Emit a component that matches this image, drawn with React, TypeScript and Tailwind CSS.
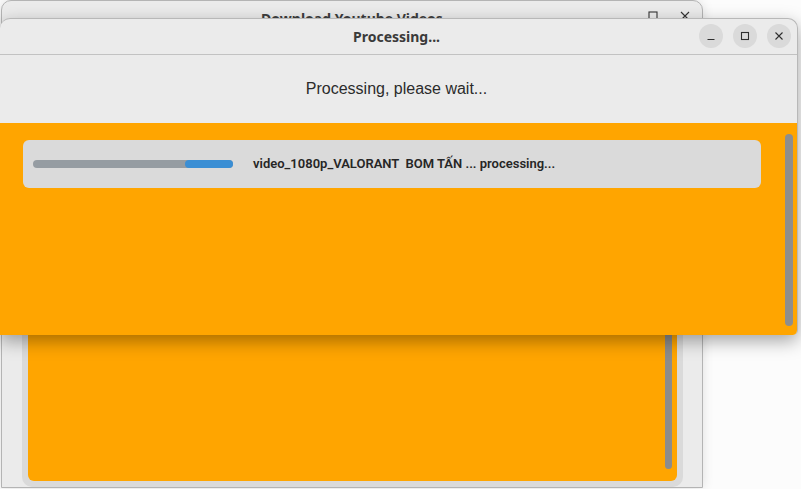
import React from 'react'

function WinButton({ kind }: { kind: 'min' | 'max' | 'close' }) {
  return (
    <div className="w-[24px] h-[24px] rounded-full bg-[#dadada] flex items-center justify-center">
      <svg width="12" height="12" viewBox="0 0 12 12" fill="none" stroke="#2e2e2e" strokeWidth="1.1">
        {kind === 'min' && <path d="M2.5 9.5h7" />}
        {kind === 'max' && <rect x="2.5" y="2.5" width="7" height="7" />}
        {kind === 'close' && <path d="M2.5 2.5l7 7M9.5 2.5l-7 7" />}
      </svg>
    </div>
  )
}

export default function App() {
  return (
    <div className="relative w-[801px] h-[489px] overflow-hidden bg-[#fcfcfc]" style={{ fontFamily: '"Liberation Sans", Arial, sans-serif' }}>
      {/* Background window */}
      <div className="absolute left-[1px] top-0 w-[702px] h-[488px] flex flex-col rounded-t-[10px] border border-[#b4b4b4] bg-[#ebebeb] shadow-[0_0_12px_rgba(0,0,0,0.12)]">
        <div className="relative h-[37px] flex items-center justify-center">
          <span className="text-[14px] font-bold text-[#3d3d3d] mt-[-2px]" style={{ fontFamily: '"Noto Sans", sans-serif' }}>Download Youtube Videos</span>
          <div className="absolute right-[10px] top-[8px] flex gap-[18px] text-[#333]">
            <svg width="14" height="14" viewBox="0 0 14 14" fill="none" stroke="#333" strokeWidth="1.1"><rect x="3" y="3" width="8" height="8" /></svg>
            <svg width="14" height="14" viewBox="0 0 14 14" fill="none" stroke="#333" strokeWidth="1.1"><path d="M3 3l8 8M11 3l-8 8" /></svg>
          </div>
        </div>
        <div className="flex-1 flex flex-col pl-[20px] pr-[19px] pt-[24px]">
          <div className="flex-1 rounded-b-[10px] bg-[#dadada] px-[6px] pb-[6px] pt-[6px]">
            <div className="h-full rounded-[6px] bg-[#ffa500] flex justify-end pr-[5px] pt-[20px] pb-[12px]">
              <div className="w-[7px] rounded-full bg-[#8c8c8c]" />
            </div>
          </div>
        </div>
      </div>

      {/* Processing dialog */}
      <div className="absolute left-0 top-[18px] w-[798px] h-[317px] flex flex-col rounded-t-[10px] rounded-br-[5px] border-r border-t border-[#b8b8b8] bg-[#ebebeb] shadow-[0_6px_18px_rgba(0,0,0,0.35)] overflow-hidden">
        <div className="relative h-[36px] flex items-center justify-center border-b border-[#c2c2c2] shrink-0">
          <span className="text-[14px] font-bold text-[#3a3a3a] ml-[-4px]" style={{ fontFamily: '"Noto Sans", sans-serif' }}>Processing...</span>
          <div className="absolute right-[6px] top-[5px] flex gap-[10px]">
            <WinButton kind="min" />
            <WinButton kind="max" />
            <WinButton kind="close" />
          </div>
        </div>
        <div className="h-[68px] flex items-center justify-center shrink-0">
          <span className="text-[16px] text-[#2b2b2b] ml-[-4px]">Processing, please wait...</span>
        </div>
        <div className="flex-1 flex bg-[#ffa500] pl-[23px] pr-[4px]">
          <div className="flex-1 pt-[17px]">
            <div className="h-[48px] rounded-[6px] bg-[#dadada] flex items-center px-[10px] gap-[20px]">
              <div className="w-[200px] h-[8px] rounded-full bg-[#959ca2] flex justify-end">
                <div className="w-[48px] h-full rounded-full bg-[#3a8ed4]" />
              </div>
              <span className="text-[13px] font-semibold text-[#262626] whitespace-pre" style={{ fontFamily: 'Roboto, "Noto Sans", sans-serif' }}>video_1080p_VALORANT  BOM TẤN ... processing...</span>
            </div>
          </div>
          <div className="ml-[24px] pt-[11px] pb-[9px]">
            <div className="w-[8px] h-full rounded-full bg-[#8e8e8e]" />
          </div>
        </div>
      </div>
    </div>
  )
}
